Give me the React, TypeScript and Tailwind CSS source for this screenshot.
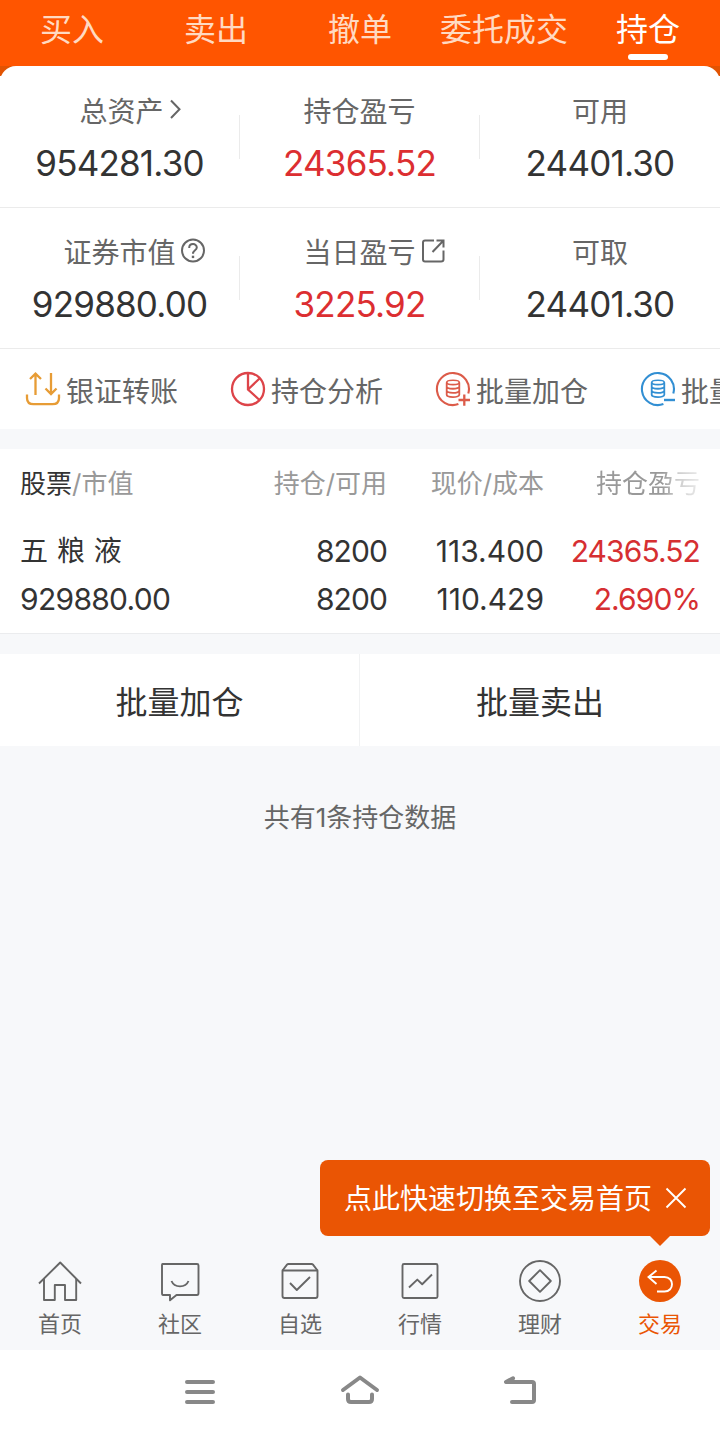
import type { ReactNode } from "react";
import clsx from "clsx";

const tabs = ["买入", "卖出", "撤单", "委托成交", "持仓"];

function ChevronIcon() {
  return (
    <svg className="ml-[5px] shrink-0" width="14" height="22" viewBox="0 0 14 22" fill="none" stroke="#666" strokeWidth="2">
      <path d="M2 1.5 L10.5 10.2 L2 19" />
    </svg>
  );
}

function HelpIcon() {
  return (
    <svg className="ml-1 shrink-0" width="26" height="26" viewBox="0 0 26 26" fill="none" stroke="#666" strokeWidth="2">
      <circle cx="13" cy="12.5" r="11" />
      <path d="M9.2 9.9 C9.2 4.9 16.8 4.9 16.8 9.5 C16.8 12.3 13 12.3 13 15.7" />
      <path d="M13 17.7 V20.1" strokeWidth="2.4" />
    </svg>
  );
}

function ShareIcon() {
  return (
    <svg className="ml-1 shrink-0" width="26" height="26" viewBox="0 0 26 26" fill="none" stroke="#666" strokeWidth="2">
      <path d="M14 2.5 H5 Q3 2.5 3 4.5 V21.5 Q3 23.5 5 23.5 H21 Q23.5 23.5 23.5 21.5 V12.5" />
      <path d="M16.5 2.5 H23.5 V9.5 M23.5 2.5 L12.5 14" />
    </svg>
  );
}

function TransferIcon() {
  return (
    <svg width="36" height="36" viewBox="0 0 36 36" fill="none" stroke="#e79c35" strokeWidth="2.3">
      <path d="M10.5 24 V3 M5 8 L10.5 2.6 L16 8" />
      <path d="M26 2 V22.5 M20.5 17.5 L26 23 L31.5 17.5" />
      <path d="M2 23.5 V27 Q2 33.2 8.5 33.2 H27.5 Q34 33.2 34 27 V23.5" />
    </svg>
  );
}

function PieIcon() {
  return (
    <svg width="36" height="36" viewBox="0 0 36 36" fill="none" stroke="#dd4449" strokeWidth="2.3">
      <circle cx="18" cy="18" r="16" />
      <path d="M18 2 V18.5 L29.5 29 M18 18.5 L29.5 7.5" />
    </svg>
  );
}

function CoinIcon({ color, minus }: { color: string; minus?: boolean }) {
  return (
    <svg width="36" height="36" viewBox="0 0 36 36" fill="none" stroke={color} strokeWidth="2.1">
      <path d="M23.4 33.1 A16 16 0 1 1 33.3 22.5" />
      <ellipse cx="18" cy="11.4" rx="6.3" ry="2.2" strokeWidth="1.6" />
      <path
        d="M11.7 11.4 V23.8 C11.7 26.8 24.3 26.8 24.3 23.8 V11.4 M11.7 15.5 C11.7 18.5 24.3 18.5 24.3 15.5 M11.7 19.6 C11.7 22.6 24.3 22.6 24.3 19.6"
        strokeWidth="1.8"
      />
      {minus ? <path d="M24 29 H35" strokeWidth="2.4" /> : <path d="M23.5 29 H35 M29.3 23.4 V34.8" strokeWidth="2.3" />}
    </svg>
  );
}

const summary = [
  [
    { label: "总资产", value: "954281.30", icon: <ChevronIcon />, shift: true },
    { label: "持仓盈亏", value: "24365.52", up: true },
    { label: "可用", value: "24401.30" },
  ],
  [
    { label: "证券市值", value: "929880.00", icon: <HelpIcon /> },
    { label: "当日盈亏", value: "3225.92", icon: <ShareIcon />, up: true },
    { label: "可取", value: "24401.30" },
  ],
];

const actions = [
  { label: "银证转账", icon: <TransferIcon /> },
  { label: "持仓分析", icon: <PieIcon /> },
  { label: "批量加仓", icon: <CoinIcon color="#dc5b49" /> },
  { label: "批量卖出", icon: <CoinIcon color="#328fd3" minus /> },
];

function NavIcon({ children }: { children: ReactNode }) {
  return (
    <svg width="44" height="44" viewBox="0 0 44 44" fill="none" stroke="#666" strokeWidth="1.9" strokeLinejoin="round">
      {children}
    </svg>
  );
}

const bottomNav = [
  {
    label: "首页",
    icon: (
      <NavIcon>
        <path d="M1 24.5 L22.2 3.5 L43 24.5" />
        <path d="M6 20 V41 H16.8 V26 H27 V41 H38.2 V20" />
      </NavIcon>
    ),
  },
  {
    label: "社区",
    icon: (
      <NavIcon>
        <path d="M4.5 5 H39 Q40.5 5 40.5 6.5 V34 Q40.5 36 39 36 H18.5 L12 41.3 V36 H5 Q4 36 4 34 V6 Q4 5 4.5 5 Z" />
        <path d="M13.5 22 C16.5 29.2 27.5 29.2 30.5 22" />
      </NavIcon>
    ),
  },
  {
    label: "自选",
    icon: (
      <NavIcon>
        <path d="M4.5 11.5 H39.5 V37 Q39.5 39 37.5 39 H6.5 Q4.5 39 4.5 37 Z" />
        <path d="M4.5 11.5 L9 5.6 Q9.5 5 10.5 5 H33.5 Q34.5 5 35 5.6 L39.5 11.5" />
        <path d="M12 24 L18.8 31 L32 18" />
      </NavIcon>
    ),
  },
  {
    label: "行情",
    icon: (
      <NavIcon>
        <rect x="4.5" y="5" width="35" height="34" rx="1.5" />
        <path d="M11 28.5 L19.3 20.6 L24.2 25.2 L34 15.5" />
      </NavIcon>
    ),
  },
  {
    label: "理财",
    icon: (
      <NavIcon>
        <circle cx="22" cy="22" r="20" />
        <path d="M22 11.2 L32.8 22 L22 32.8 L11.2 22 Z" />
      </NavIcon>
    ),
  },
  {
    label: "交易",
    active: true,
    icon: (
      <svg width="44" height="44" viewBox="0 0 44 44" fill="none" stroke="#fff" strokeWidth="1.9">
        <circle cx="22" cy="22" r="21" fill="#ea5504" stroke="none" />
        <path d="M18.5 11.5 L10.5 18 L18.5 25" />
        <path d="M10.5 18 H26.5 C36.5 18 36.5 32.5 26.5 32.5 H19" />
      </svg>
    ),
  },
];

function Header() {
  return (
    <div className="flex h-[66px] bg-[#ff5500]">
      {tabs.map((tab, i) => {
        const active = i === tabs.length - 1;
        return (
          <div key={tab} className="flex w-36 flex-col items-center">
            <span className={clsx("h-[54px] text-[32px] leading-[60px]", active ? "text-white" : "text-[#ffdac2]")}>{tab}</span>
            {active && <span className="h-1.5 w-10 rounded-full bg-white" />}
          </div>
        );
      })}
    </div>
  );
}

function Summary() {
  return (
    <div className="bg-[linear-gradient(#e25302_10px,#fff_10px)]">
      <div className="rounded-t-[16px] bg-white">
        {summary.map((row, r) => (
          <div
            key={r}
            className={clsx("grid grid-cols-3 border-b border-[#ebebeb]", r === 0 ? "h-[142px] pt-[25px]" : "h-[141px] pt-6")}
          >
            {row.map((cell, c) => (
              <div key={cell.label} className="flex">
                <div className="flex flex-1 flex-col items-center">
                  <div className={clsx("flex h-10 items-center text-[28px] text-[#666]", cell.shift && "pl-1")}>
                    <span className="pt-0.5 leading-10">{cell.label}</span>
                    {/* zero width keeps the label itself centred */}
                    <span className="flex w-0 pb-0.5">{cell.icon}</span>
                  </div>
                  <span className={clsx("text-[35px] leading-[64px] tracking-[-0.8px]", cell.up ? "text-[#dc2e31]" : "text-[#333]")}>
                    {cell.value}
                  </span>
                </div>
                {c < 2 && <div className="mt-6 h-11 w-px bg-[#ebebeb]" />}
              </div>
            ))}
          </div>
        ))}
        <div className="flex h-20 items-center gap-[52px] overflow-hidden pl-[25px]">
          {actions.map((action) => (
            <div key={action.label} className="flex shrink-0 items-center gap-[5px]">
              {action.icon}
              <span className="pt-1.5 text-[28px] leading-9 whitespace-nowrap text-[#666]">{action.label}</span>
            </div>
          ))}
        </div>
      </div>
    </div>
  );
}

function Holdings() {
  return (
    <div className="mt-5 border-b border-[#ebecee] bg-white px-5 pb-2.5">
      <div className="grid h-[78px] grid-cols-[1fr_140px_157px_156px] text-right text-[26px] leading-[70px] text-[#999]">
        <span className="text-left">
          <span className="text-[#333]">股票</span>/市值
        </span>
        <span>持仓/可用</span>
        <span>现价/成本</span>
        <span className="[mask-image:linear-gradient(to_right,#000_76%,rgba(0,0,0,0.5)_85%,rgba(0,0,0,0.2)_100%)]">持仓盈亏</span>
      </div>
      <div className="grid grid-cols-[1fr_140px_157px_156px] text-right text-[30px] leading-12 tracking-[-0.9px] text-[#333]">
        <span className="text-left text-[28px] tracking-normal [word-spacing:1px]">五 粮 液</span>
        <span>8200</span>
        <span className="tracking-normal">113.400</span>
        <span className="text-[#d62f32]">24365.52</span>
        <span className="text-left tracking-[-0.7px]">929880.00</span>
        <span>8200</span>
        <span className="tracking-normal">110.429</span>
        <span className="text-[#d62f32]">2.690%</span>
      </div>
    </div>
  );
}

function BottomNav() {
  return (
    <div className="relative grid h-[100px] grid-cols-6">
      <div className="absolute right-2.5 bottom-[114px] flex h-19 w-[390px] items-center rounded-lg bg-[#ea5504] pl-6 text-[28px] text-white">
        <span className="pt-0.5 leading-10">点此快速切换至交易首页</span>
        <svg className="ml-[13px]" width="22" height="22" viewBox="0 0 22 22" stroke="#fff" strokeWidth="1.9">
          <path d="M1.5 1.5 L20.5 20.5 M20.5 1.5 L1.5 20.5" />
        </svg>
        <svg className="absolute top-full right-10" width="20" height="10" viewBox="0 0 20 10" fill="#ea5504">
          <path d="M0 0 H20 L10 10 Z" />
        </svg>
      </div>
      {bottomNav.map((item) => (
        <div key={item.label} className="flex flex-col items-center pt-[9px]">
          {item.icon}
          <span className={clsx("text-[22px] leading-[42px]", item.active ? "text-[#ea5504]" : "text-[#666]")}>{item.label}</span>
        </div>
      ))}
    </div>
  );
}

function SystemBar() {
  return (
    <div className="flex h-[82px] items-center justify-center gap-30 bg-white">
      <svg width="40" height="40" viewBox="0 0 40 40" stroke="#888" strokeWidth="4" strokeLinecap="round">
        <path d="M7 11 H33 M7 21 H33 M7 31 H33" />
      </svg>
      <svg width="40" height="40" viewBox="0 0 40 40" fill="none" stroke="#888" strokeWidth="4" strokeLinecap="round" strokeLinejoin="round">
        <path d="M3 19 L20 6.5 L37 19" />
        <path d="M8 23.5 V28 Q8 31 11 31 H29 Q32 31 32 28 V23.5" />
      </svg>
      <svg width="40" height="40" viewBox="0 0 40 40" fill="none" stroke="#888" strokeWidth="4" strokeLinecap="round" strokeLinejoin="round">
        <path d="M13 7.3 L6 11 H32 Q34 11 34 13 V29 Q34 31 32 31 H12" />
      </svg>
    </div>
  );
}

export default function App() {
  return (
    <div className="flex h-[1432px] w-[720px] flex-col overflow-hidden bg-[#f7f8fa] font-['Inter','Noto_Sans_CJK_SC',sans-serif]">
      <Header />
      <Summary />
      <Holdings />
      <div className="mt-5 grid h-[92px] shrink-0 grid-cols-2 bg-white text-center text-[32px] leading-[90px] text-[#333]">
        <div className="h-[92px] border-r border-[#f1f2f3] pt-1">批量加仓</div>
        <div className="h-[92px] pt-1">批量卖出</div>
      </div>
      <p className="mt-[52px] text-center text-[26px] leading-10 text-[#666]">共有1条持仓数据</p>
      <div className="flex-1" />
      <BottomNav />
      <SystemBar />
    </div>
  );
}
